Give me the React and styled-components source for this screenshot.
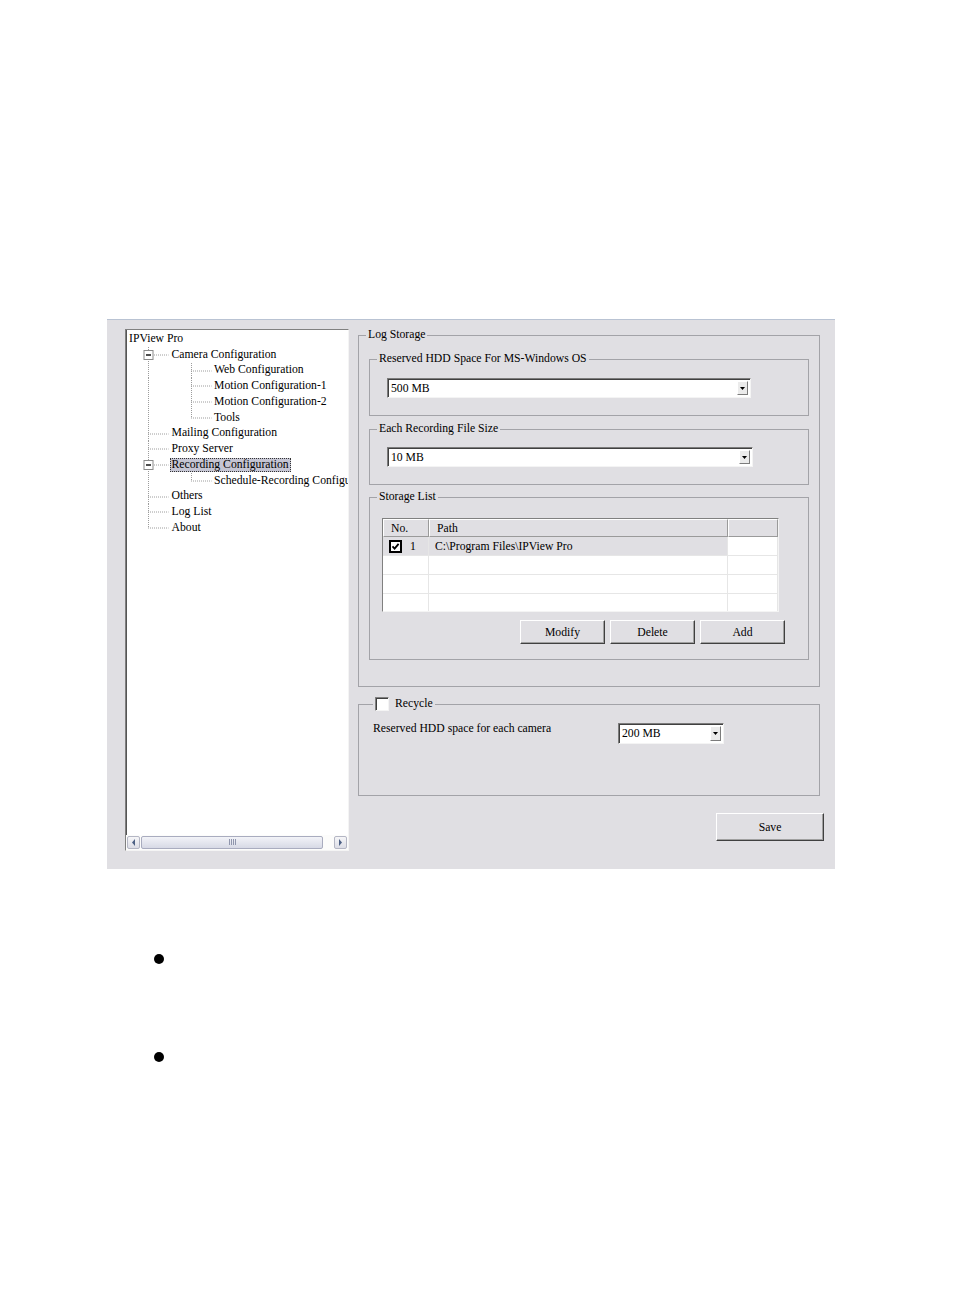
import React from "react";
import styled, { createGlobalStyle } from "styled-components";

const GlobalStyle = createGlobalStyle`
  html, body {
    margin: 0;
    padding: 0;
    background: #fff;
  }
  body {
    font-family: "Liberation Serif", "Times New Roman", serif;
    font-size: 11.7px;
    color: #000;
  }
`;

const Page = styled.div`
  width: 954px;
  min-height: 1314px;
  box-sizing: border-box;
  padding: 319px 0 0 107px;
`;

const Window = styled.div`
  width: 728px;
  height: 550px;
  box-sizing: border-box;
  background: #e0dfe3;
  border-top: 1px solid #b9c3d3;
  padding: 9px 0 0 18px;
  display: grid;
  grid-template-columns: 224px 466px;
  column-gap: 9px;
  align-items: start;
`;

/* ---------- tree ---------- */

const TreeBox = styled.div`
  width: 224px;
  height: 522px;
  box-sizing: border-box;
  background: #fff;
  border: 1px solid;
  border-color: #808080 #f4f4f4 #f4f4f4 #808080;
  box-shadow: inset 1px 0 0 #555;
  display: flex;
  flex-direction: column;
  overflow: hidden;
`;

const TreeList = styled.div`
  flex: 1;
  padding: 1px 0 0 1px;
  overflow: hidden;
`;

const TreeRow = styled.div`
  display: flex;
  align-items: center;
  height: 15.75px;
  white-space: nowrap;
`;

const TreeLabel = styled.span`
  padding: 0 2px;
  line-height: 14px;
  background: ${(p) => (p.$selected ? "#c5c5d3" : "transparent")};
  outline: ${(p) => (p.$selected ? "1px dotted #333" : "none")};
  outline-offset: -1px;
`;

const HScroll = styled.div`
  height: 14px;
  display: flex;
  align-items: center;
  gap: 1px;
  padding: 0 1px 1px 1px;
  background: #fcfcfb;
`;

const ScrollArrow = styled.span`
  width: 13px;
  height: 13px;
  box-sizing: border-box;
  border: 1px solid #b4b6c4;
  border-radius: 2px;
  background: linear-gradient(#f6f6f8, #dcdde6);
  display: flex;
  align-items: center;
  justify-content: center;
`;

const ScrollThumb = styled.span`
  width: 182px;
  height: 13px;
  box-sizing: border-box;
  border: 1px solid #a9acbf;
  border-radius: 2px;
  background: linear-gradient(#f2f3f8, #d7d9e5);
  display: flex;
  align-items: center;
  justify-content: center;
`;

const ScrollTrack = styled.span`
  flex: 1;
`;

/* ---------- group boxes ---------- */

const RightPane = styled.div`
  display: flex;
  flex-direction: column;
  margin-top: -1px;
`;

const GroupBox = styled.fieldset`
  margin: ${(p) => p.$margin || "0"};
  padding: ${(p) => p.$pad};
  width: ${(p) => p.$w}px;
  box-sizing: border-box;
  min-width: 0;
  border: 1px solid #a3a3a8;
  border-radius: 0;
`;

const Caption = styled.legend`
  padding: 0 2px;
  margin-left: ${(p) => p.$indent}px;
  line-height: 14px;
  display: flex;
  align-items: center;
  gap: 6px;
`;

/* ---------- controls ---------- */

const Combo = styled.div`
  width: ${(p) => p.$w}px;
  height: ${(p) => p.$h || 20}px;
  box-sizing: border-box;
  display: flex;
  align-items: stretch;
  background: #fff;
  border: 1px solid;
  border-color: #7c7c7c #f4f4f4 #f4f4f4 #7c7c7c;
  box-shadow: inset 1px 1px 0 #404040;
  padding: 2px;
`;

const ComboText = styled.span`
  flex: 1;
  display: flex;
  align-items: center;
  padding-left: 1px;
`;

const DropButton = styled.span`
  width: 11px;
  box-sizing: border-box;
  background: #ebebeb;
  border: 1px solid;
  border-color: #fff #7c7c7c #7c7c7c #fff;
  display: flex;
  align-items: center;
  justify-content: center;
`;

const Button = styled.button`
  width: ${(p) => p.$w}px;
  height: ${(p) => p.$h}px;
  box-sizing: border-box;
  padding: 0;
  font-family: inherit;
  font-size: 11.7px;
  color: #000;
  background: #e0dfe3;
  border: 1px solid;
  border-color: #fff #404040 #404040 #fff;
  box-shadow: inset -1px -1px 0 #a0a0a0;
  border-radius: 0;
`;

const ButtonRow = styled.div`
  display: flex;
  justify-content: flex-end;
  gap: 5px;
  margin-top: 8px;
  padding-right: 23px;
`;

const SaveRow = styled.div`
  display: flex;
  justify-content: flex-end;
  margin-top: 17px;
`;

/* ---------- list view ---------- */

const ListView = styled.div`
  width: 397px;
  height: 94px;
  box-sizing: border-box;
  background: #fff;
  border: 1px solid;
  border-color: #808080 #f4f4f4 #f4f4f4 #808080;
  box-shadow: inset 1px 1px 0 #404040;
  display: grid;
  grid-template-columns: 46px 299px 50px;
  grid-auto-rows: 19px;
  grid-template-rows: 18px;
  overflow: hidden;
`;

const HeadCell = styled.div`
  background: #e0dfe3;
  border-top: 1px solid #fff;
  border-left: 1px solid #fff;
  border-right: 1px solid #9a9a9a;
  border-bottom: 1px solid #9a9a9a;
  box-sizing: border-box;
  padding-left: 7px;
  display: flex;
  align-items: center;
`;

const Cell = styled.div`
  box-sizing: border-box;
  border-right: 1px solid #e6e6e6;
  border-bottom: 1px solid #e6e6e6;
  background: ${(p) => (p.$hl ? "#e0dfe3" : "#fff")};
  display: flex;
  align-items: center;
  gap: 8px;
  padding-left: ${(p) => p.$pl || 6}px;
`;

const CheckBox = styled.span`
  width: 14px;
  height: 14px;
  box-sizing: border-box;
  background: #fff;
  border: 1px solid;
  border-color: #808080 #f4f4f4 #f4f4f4 #808080;
  box-shadow: inset 1px 1px 0 #404040;
  display: inline-block;
`;

const FieldRow = styled.div`
  display: flex;
  align-items: flex-start;
`;

const FieldLabel = styled.span`
  width: 245px;
  line-height: 14px;
  margin-top: -1px;
`;

/* ---------- document ---------- */

const BulletList = styled.ul`
  list-style: none;
  margin: 0;
  padding: 0 0 0 47px;
`;

const Bullet = styled.li`
  height: 98px;
  &:first-child {
    margin-top: 85px;
  }
  &::before {
    content: "";
    display: block;
    width: 10px;
    height: 10px;
    border-radius: 50%;
    background: #000;
  }
`;

/* ---------- icons ---------- */

const W = 42.5;
const H = 15.75;

const Guide = ({ kind }) => {
  const x = 21;
  const mid = 7.5;
  const dot = { stroke: "#9c9c9c", strokeWidth: 1, strokeDasharray: "1 1" };
  return (
    <svg width={W} height={H} style={{ flex: "none", display: "block" }}>
      {(kind === "|" || kind === "T" || kind === "E") && (
        <line x1={x + 0.5} y1={0} x2={x + 0.5} y2={H} {...dot} />
      )}
      {kind === "L" && <line x1={x + 0.5} y1={0} x2={x + 0.5} y2={mid} {...dot} />}
      {(kind === "T" || kind === "L" || kind === "E") && (
        <line x1={x} y1={mid + 0.5} x2={W - 1} y2={mid + 0.5} {...dot} />
      )}
      {kind === "E" && (
        <g>
          <rect x={x - 4} y={mid - 4} width={9} height={9} fill="#fff" stroke="#8a8a8a" />
          <line x1={x - 2} y1={mid + 0.5} x2={x + 3} y2={mid + 0.5} stroke="#000" strokeWidth={1.4} />
        </g>
      )}
    </svg>
  );
};

const Arrow = ({ dir }) => (
  <svg width="5" height="7" viewBox="0 0 5 7">
    {dir === "left" ? (
      <path d="M4 0 L1 3.5 L4 7 Z" fill="#4d6185" />
    ) : (
      <path d="M1 0 L4 3.5 L1 7 Z" fill="#4d6185" />
    )}
  </svg>
);

const Grip = () => (
  <svg width="7" height="6" viewBox="0 0 7 6">
    {[0.5, 2.5, 4.5, 6.5].map((x) => (
      <line key={x} x1={x} y1="0" x2={x} y2="6" stroke="#9096ad" />
    ))}
  </svg>
);

const DropArrow = () => (
  <svg width="5" height="3" viewBox="0 0 5 3">
    <path d="M0 0 H5 L2.5 3 Z" fill="#000" />
  </svg>
);

const Tick = () => (
  <svg width="13" height="13" viewBox="0 0 13 13" style={{ display: "block" }}>
    <rect x="1" y="1" width="11" height="11" fill="#fff" stroke="#000" strokeWidth="2" />
    <path d="M3.5 6.3 L5.6 8.6 L9.6 3.8" fill="none" stroke="#000" strokeWidth="1.8" />
  </svg>
);

/* ---------- data ---------- */

const treeItems = [
  { label: "IPView Pro", guides: [] },
  { label: "Camera Configuration", guides: ["E"] },
  { label: "Web Configuration", guides: ["|", "T"] },
  { label: "Motion Configuration-1", guides: ["|", "T"] },
  { label: "Motion Configuration-2", guides: ["|", "T"] },
  { label: "Tools", guides: ["|", "L"] },
  { label: "Mailing Configuration", guides: ["T"] },
  { label: "Proxy Server", guides: ["T"] },
  { label: "Recording Configuration", guides: ["E"], selected: true },
  { label: "Schedule-Recording Configuration", guides: ["|", "L"] },
  { label: "Others", guides: ["T"] },
  { label: "Log List", guides: ["T"] },
  { label: "About", guides: ["L"] },
];

const storageRows = [
  { no: "1", path: "C:\\Program Files\\IPView Pro", checked: true },
  { no: "", path: "" },
  { no: "", path: "" },
  { no: "", path: "" },
];

const Tree = () => (
  <TreeBox>
    <TreeList>
      {treeItems.map((item) => (
        <TreeRow key={item.label}>
          {item.guides.map((g, i) => (
            <Guide key={i} kind={g} />
          ))}
          <TreeLabel $selected={item.selected}>{item.label}</TreeLabel>
        </TreeRow>
      ))}
    </TreeList>
    <HScroll>
      <ScrollArrow>
        <Arrow dir="left" />
      </ScrollArrow>
      <ScrollThumb>
        <Grip />
      </ScrollThumb>
      <ScrollTrack />
      <ScrollArrow>
        <Arrow dir="right" />
      </ScrollArrow>
    </HScroll>
  </TreeBox>
);

const Select = ({ value, w, h }) => (
  <Combo $w={w} $h={h}>
    <ComboText>{value}</ComboText>
    <DropButton>
      <DropArrow />
    </DropButton>
  </Combo>
);

const App = () => (
  <Page>
    <GlobalStyle />
    <Window>
      <Tree />
      <RightPane>
        <GroupBox $w={462} $pad="10px 10px 26px 10px">
          <Caption $indent={-3}>Log Storage</Caption>

          <GroupBox $w={440} $pad="12px 0 17px 17px">
            <Caption $indent={-10}>Reserved HDD Space For MS-Windows OS</Caption>
            <Select value="500 MB" w={364} />
          </GroupBox>

          <GroupBox $w={440} $margin="6px 0 0 0" $pad="11px 0 17px 17px">
            <Caption $indent={-10}>Each Recording File Size</Caption>
            <Select value="10 MB" w={366} />
          </GroupBox>

          <GroupBox $w={440} $margin="5px 0 0 0" $pad="14px 0 15px 12px">
            <Caption $indent={-5}>Storage List</Caption>
            <ListView>
              <HeadCell>No.</HeadCell>
              <HeadCell>Path</HeadCell>
              <HeadCell />
              {storageRows.map((row, i) => (
                <React.Fragment key={i}>
                  <Cell $hl={row.checked} $pl={6}>
                    {row.checked && <Tick />}
                    {row.no}
                  </Cell>
                  <Cell $hl={row.checked}>{row.path}</Cell>
                  <Cell />
                </React.Fragment>
              ))}
            </ListView>
            <ButtonRow>
              <Button $w={85} $h={24}>Modify</Button>
              <Button $w={85} $h={24}>Delete</Button>
              <Button $w={85} $h={24}>Add</Button>
            </ButtonRow>
          </GroupBox>
        </GroupBox>

        <GroupBox $w={462} $margin="10px 0 0 0" $pad="12px 0 51px 14px">
          <Caption $indent={0}>
            <CheckBox />
            Recycle
          </Caption>
          <FieldRow>
            <FieldLabel>Reserved HDD space for each camera</FieldLabel>
            <Select value="200 MB" w={106} h={21} />
          </FieldRow>
        </GroupBox>

        <SaveRow>
          <Button $w={108} $h={28}>Save</Button>
        </SaveRow>
      </RightPane>
    </Window>
    <BulletList>
      <Bullet />
      <Bullet />
    </BulletList>
  </Page>
);

export default App;
